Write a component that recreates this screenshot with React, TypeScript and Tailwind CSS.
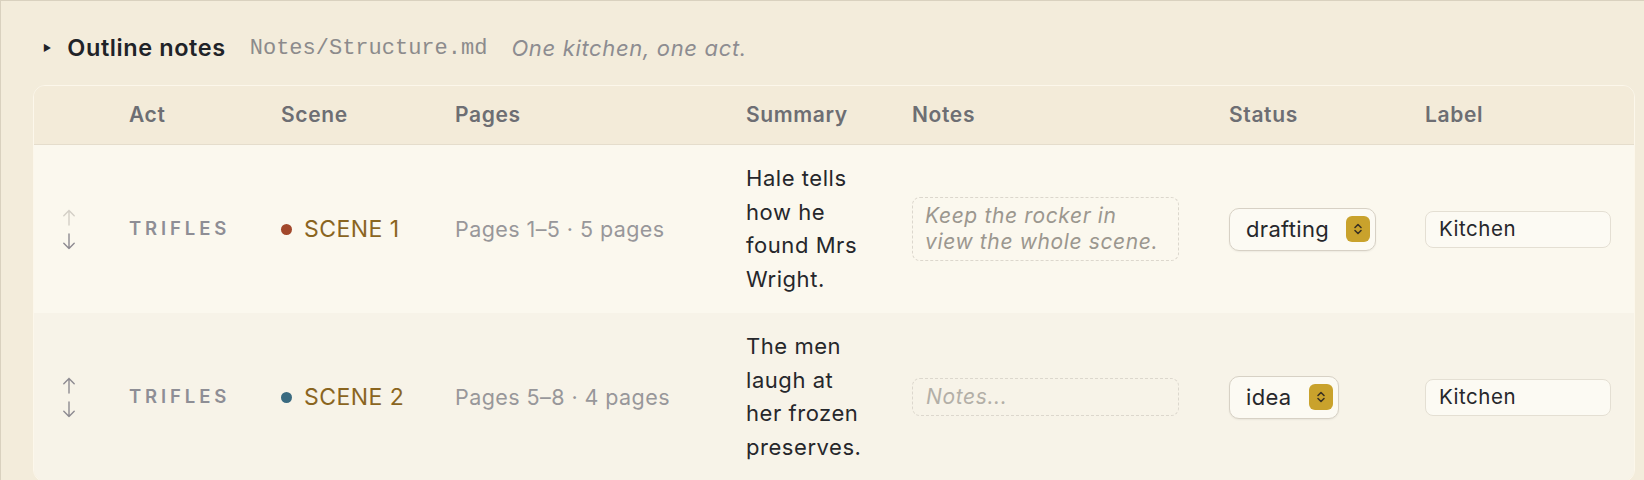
type Scene = {
  act: string;
  name: string;
  dot: string;
  pages: string;
  summary: string;
  notes: string;
  status: string;
  label: string;
  canUp: boolean;
  bg: string;
};

const scenes: Scene[] = [
  {
    act: "Trifles",
    name: "Scene 1",
    dot: "bg-[#a2482b]",
    pages: "Pages 1–5 · 5 pages",
    summary: "Hale tells how he found Mrs Wright.",
    notes: "Keep the rocker in view the whole scene.",
    status: "drafting",
    label: "Kitchen",
    canUp: false,
    bg: "bg-[#fbf8ee]",
  },
  {
    act: "Trifles",
    name: "Scene 2",
    dot: "bg-[#3a6a80]",
    pages: "Pages 5–8 · 4 pages",
    summary: "The men laugh at her frozen preserves.",
    notes: "",
    status: "idea",
    label: "Kitchen",
    canUp: true,
    bg: "bg-[#f7f3e8]",
  },
];

const cols = "grid grid-cols-[79px_152px_174px_291px_166px_317px_196px_1fr]";

// thin arrow, like the ↑ glyph
function Arrow({ down, faded }: { down?: boolean; faded?: boolean }) {
  return (
    <svg
      width="14"
      height="17"
      viewBox="0 0 14 17"
      fill="none"
      className={(down ? "rotate-180 " : "") + (faded ? "text-[#d3cfc6]" : "text-[#8d8a91]")}
    >
      <path d="M7 1.5V16M1.8 6.8 7 1.5l5.2 5.3" stroke="currentColor" strokeWidth="1.4" strokeLinecap="round" strokeLinejoin="round" />
    </svg>
  );
}

// little mac-style select chevrons
function Chevrons() {
  return (
    <svg width="12" height="16" viewBox="0 0 12 16" fill="none">
      <path d="M3 6.5 6 3.5 9 6.5M3 9.5 6 12.5 9 9.5" stroke="#3b3222" strokeWidth="1.6" strokeLinecap="round" strokeLinejoin="round" />
    </svg>
  );
}

function Row({ s }: { s: Scene }) {
  return (
    <div className={cols + " h-[168px] items-center " + s.bg}>
      <div className="flex flex-col gap-[7px] pl-[28px]">
        <Arrow faded={!s.canUp} />
        <Arrow down />
      </div>
      <div className="px-4 text-[18.5px] font-semibold uppercase tracking-[0.21em] text-[#8e8e95]">{s.act}</div>
      <div className="px-4 flex items-center gap-3">
        <span className={"w-[11px] h-[11px] rounded-full " + s.dot} />
        <span className="text-[23px] uppercase tracking-[0.02em] text-[#8a651f]">{s.name}</span>
      </div>
      <div className="px-4 text-[21.5px] tracking-[0.02em] text-[#98979a]">{s.pages}</div>
      <div className="px-4">
        <p className="w-[126px] text-[22px] leading-[33.5px] tracking-[0.025em] text-[#26272b]">{s.summary}</p>
      </div>
      <div className="px-4">
        <div className="w-[267px] rounded-[8px] border-[1.5px] border-dashed border-[#dcd7cd] px-3 py-[5px] text-[21px] italic leading-[26px] tracking-[0.03em]">
          {s.notes ? (
            <span className="block text-[#9b978f]">{s.notes}</span>
          ) : (
            <span className="pl-px text-[#b3afa7]">Notes...</span>
          )}
        </div>
      </div>
      <div className="px-4">
        <div className="inline-flex h-[43px] items-center gap-[17px] rounded-[10px] border border-[#d7d1c5] bg-[#fcfaf3] pl-4 pr-[5px] shadow-[0_1px_2px_rgba(0,0,0,0.06)]">
          <span className="text-[22px] tracking-[0.015em] text-[#26272b]">{s.status}</span>
          <span className="flex h-[26px] w-[24px] items-center justify-center rounded-[6px] bg-[#c9a22c]">
            <Chevrons />
          </span>
        </div>
      </div>
      <div className="px-4">
        <div className="flex h-[37px] w-[186px] items-center rounded-[8px] border border-[#e4dfd3] bg-[#fcfaf3] px-[13px] text-[20.5px] tracking-[0.025em] text-[#26272b]">
          {s.label}
        </div>
      </div>
    </div>
  );
}

export default function App() {
  return (
    <div className="h-[480px] w-[1644px] overflow-hidden border-l border-t border-[#d9d1bf] bg-[#f3ecdb] pl-8 pr-[9px] pt-[31px] font-['Inter',sans-serif]">
      {/* Title line */}
      <div className="flex h-8 items-center pl-[10px]">
        <span className="mr-[16px] text-[9px] text-[#1f2328]">▶</span>
        <span className="mr-6 text-[23.5px] font-semibold tracking-[0.025em] text-[#1f2328]">Outline notes</span>
        <span className="mr-6 font-['Liberation_Mono',monospace] text-[22px] text-[#8c8b8c]">Notes/Structure.md</span>
        <span className="text-[22px] italic tracking-[0.03em] text-[#8d8c91]">One kitchen, one act.</span>
      </div>

      {/* Table card */}
      <div className="mt-[21px] overflow-hidden rounded-xl border border-[#fcf7eb]">
        <div className={cols + " h-[59px] items-center border-b border-[#e5ddcc] bg-[#f3ebd9] text-[21px] font-semibold tracking-[0.03em] text-[#6d6e73]"}>
          <div />
          <div className="px-4">Act</div>
          <div className="px-4">Scene</div>
          <div className="px-4">Pages</div>
          <div className="px-4">Summary</div>
          <div className="px-4">Notes</div>
          <div className="px-4">Status</div>
          <div className="px-4">Label</div>
        </div>
        {scenes.map((s) => (
          <Row key={s.name} s={s} />
        ))}
      </div>
    </div>
  );
}
